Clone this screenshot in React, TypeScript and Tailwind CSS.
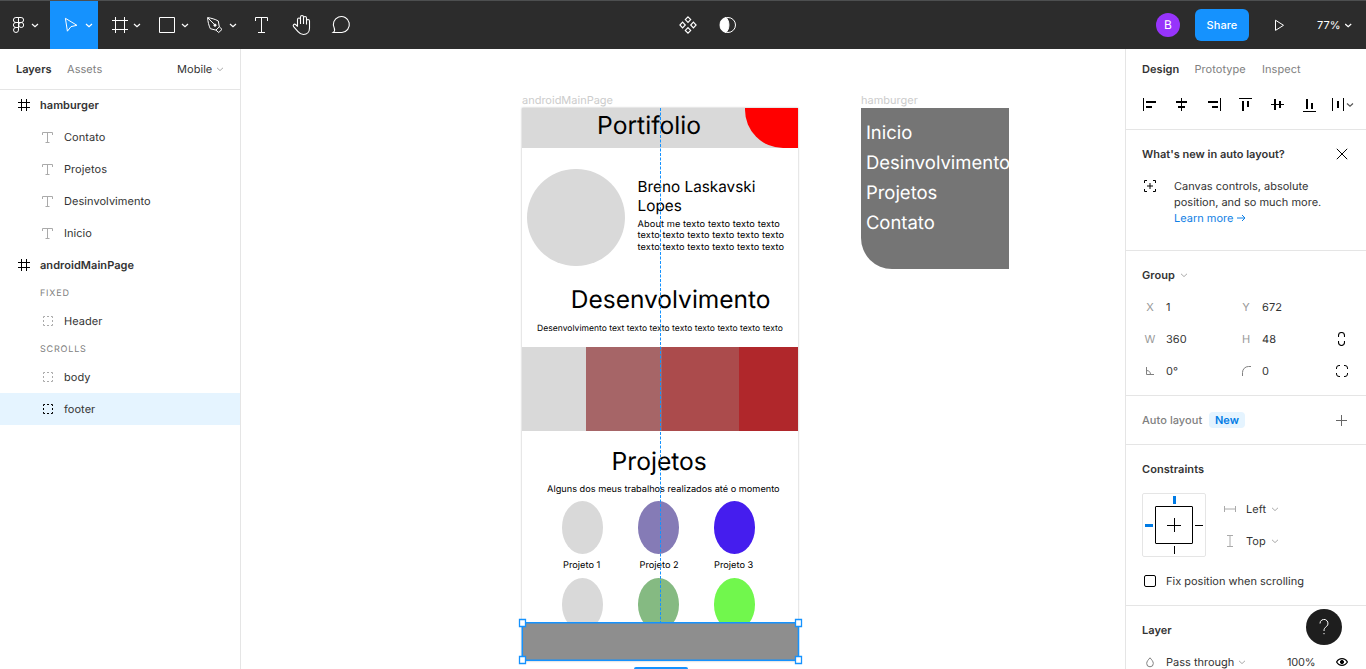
import React from "react";

type IconProps = {
  box: string;
  w: number;
  h: number;
  className?: string;
  children: React.ReactNode;
};

function Icon({ box, w, h, className = "", children }: IconProps) {
  return (
    <svg
      viewBox={box}
      width={w}
      height={h}
      fill="none"
      stroke="currentColor"
      strokeWidth={1}
      className={"shrink-0 " + className}
    >
      {children}
    </svg>
  );
}

function Chevron({ className = "" }: { className?: string }) {
  return (
    <Icon box="0 0 8 8" w={8} h={8} className={className}>
      <path d="M1 2.8 4 5.6 7 2.8" />
    </Icon>
  );
}

function Toolbar() {
  return (
    <header className="flex h-[49px] shrink-0 items-stretch border-t border-[#4d4f50] bg-[#2c2c2c] text-white">
      <Icon box="0 1 50 48" w={50} h={48}>
        <path d="M18.5 17.5h-2.6a2.5 2.5 0 0 0 0 5h2.6zM18.5 17.5h2.6a2.5 2.5 0 0 1 0 5h-2.6zM18.5 22.5h-2.6a2.5 2.5 0 0 0 0 5h2.6zM18.5 27.5h-2.6a2.5 2.5 0 1 0 2.6 2.6z" />
        <circle cx="21.2" cy="25" r="2.5" />
        <path d="M32 24l3 2.8 3-2.8" strokeWidth="1.2" />
      </Icon>
      <div className="flex bg-[#1592fe]">
        <Icon box="50 1 48 48" w={48} h={48}>
          <path d="M65.4 18.3 76.9 25.3 71 26.6 67.4 31.2z" strokeLinejoin="round" />
          <path d="M86 24l3 2.8 3-2.8" strokeWidth="1.2" />
        </Icon>
      </div>
      <Icon box="98 1 48 48" w={48} h={48}>
        <path d="M115.5 17v16M124.5 17v16M112 20.5h16M112 29.5h16" />
        <path d="M134 24l3 2.8 3-2.8" strokeWidth="1.2" />
      </Icon>
      <Icon box="146 1 48 48" w={48} h={48}>
        <path d="M159.5 17.5h15v15h-15z" />
        <path d="M182 24l3 2.8 3-2.8" strokeWidth="1.2" />
      </Icon>
      <Icon box="194 1 48 48" w={48} h={48}>
        <path d="M207.6 17.6c3.6.5 7.6 1.6 10.7 3.4l1 5.8-3.4 3.3-5.6-1.4c-1.5-3.2-2.5-7.2-2.7-11.1z" />
        <path d="M219.3 26.8l2.7 2.6-3.3 3.1-2.8-2.4M207.8 17.8l6.7 6.8" />
        <circle cx="215" cy="25.2" r="1.1" fill="currentColor" />
        <path d="M230 24l3 2.8 3-2.8" strokeWidth="1.2" />
      </Icon>
      <Icon box="242 1 40 48" w={40} h={48}>
        <path d="M255.5 21v-3.5h12V21M261.5 17.5v15M258 32.5h7" />
      </Icon>
      <Icon box="282 1 40 48" w={40} h={48}>
        <path
          d="M297.5 26.8v-7.3a1.5 1.5 0 0 1 3 0v4.5M300.5 24v-7a1.5 1.5 0 0 1 3 0v7M303.5 24v-6a1.5 1.5 0 0 1 3 0v6.5M306.5 24.5v-3.5a1.5 1.5 0 0 1 3 0v7c0 3.8-2.3 6.5-6 6.5-2.7 0-4-1-5.5-2.8l-4.4-5a1.5 1.5 0 0 1 2-2.2l1.9 1.8"
          strokeWidth="1.1"
        />
      </Icon>
      <Icon box="322 1 40 48" w={40} h={48}>
        <path d="M333.2 32.5c1.4-1 1.8-2.3 1.1-4.2a8 8 0 1 1 7.6 4.2z" strokeWidth="1.1" />
      </Icon>
      <div className="flex flex-1 pl-[306px]">
        <Icon box="668 1 40 48" w={40} h={48}>
          <path
            d="M688 16.8l2.7 2.8-2.7 2.8-2.7-2.8zM688 27.6l2.7 2.8-2.7 2.8-2.7-2.8zM682.6 22.2l2.7 2.8-2.7 2.8-2.7-2.8zM693.4 22.2l2.7 2.8-2.7 2.8-2.7-2.8z"
            strokeWidth="1.15"
          />
        </Icon>
        <Icon box="708 1 40 48" w={40} h={48}>
          <circle cx="728" cy="25" r="7.5" />
          <path d="M726 17.5a7.7 7.7 0 0 0 0 15c3.9-3.5 3.9-11.5 0-15z" fill="currentColor" />
        </Icon>
      </div>
      <div className="flex w-[210px] items-center">
        <span className="flex h-6 w-6 items-center justify-center rounded-full bg-[#9734fb] text-xs">B</span>
        <button className="ml-[15px] h-8 w-[54px] rounded-md bg-[#1592fe] text-[11px] font-medium">Share</button>
        <Icon box="1249 1 60 48" w={60} h={48}>
          <path d="M1275.5 20.2v10.2l8-5.1z" />
        </Icon>
        <span className="ml-2 w-[28px] text-[11px]">77%</span>
        <Icon box="1345 1 8 48" w={8} h={48}>
          <path d="M1345.2 24l3 2.8 3-2.8" strokeWidth="1.2" />
        </Icon>
      </div>
    </header>
  );
}

function FrameRow({ name }: { name: string }) {
  return (
    <div className="flex h-8 items-center pl-[18px] font-semibold">
      <Icon box="0 0 12 12" w={12} h={12} className="text-black">
        <path d="M3.5 0v12M8.5 0v12M0 3.5h12M0 8.5h12" />
      </Icon>
      <span className="ml-[10px]">{name}</span>
    </div>
  );
}

function TextRow({ name }: { name: string }) {
  return (
    <div className="flex h-8 items-center pl-[42px]">
      <Icon box="0 0 11 11" w={11} h={11} className="text-[#aaaaaa]">
        <path d="M0.5 3V0.5h10V3M5.5 0.5v10M3.5 10.5h4" />
      </Icon>
      <span className="ml-[11px]">{name}</span>
    </div>
  );
}

function GroupRow({ name, selected = false }: { name: string; selected?: boolean }) {
  return (
    <div className={"flex h-8 items-center pl-[43px] " + (selected ? "bg-[#e5f4ff]" : "")}>
      <Icon box="0 0 10 10" w={10} h={10} className={selected ? "text-black" : "text-[#aaaaaa]"}>
        <path d="M0.5 2V0.5H2M8 0.5h1.5V2M9.5 8v1.5H8M2 9.5H0.5V8M4 0.5h2M4 9.5h2M0.5 4v2M9.5 4v2" />
      </Icon>
      <span className="ml-[11px]">{name}</span>
    </div>
  );
}

function SectionLabel({ children }: { children: string }) {
  return (
    <div className="flex h-6 items-center pl-10 pt-px text-[9px] tracking-[0.09em] text-[#808080]">{children}</div>
  );
}

function LayersPanel() {
  return (
    <aside className="w-[241px] shrink-0 border-r border-[#e5e5e5] bg-white">
      <div className="flex h-[41px] items-center border-b border-[#e5e5e5] pl-4">
        <span className="w-[51px] font-semibold tracking-normal">Layers</span>
        <span className="w-[110px] text-[#808080]">Assets</span>
        <span className="w-[39px]">Mobile</span>
        <Chevron className="text-[#aaaaaa]" />
      </div>
      <div className="-mt-px">
        <FrameRow name="hamburger" />
        <TextRow name="Contato" />
        <TextRow name="Projetos" />
        <TextRow name="Desinvolvimento" />
        <TextRow name="Inicio" />
        <FrameRow name="androidMainPage" />
        <SectionLabel>FIXED</SectionLabel>
        <GroupRow name="Header" />
        <SectionLabel>SCROLLS</SectionLabel>
        <GroupRow name="body" />
        <GroupRow name="footer" selected />
      </div>
    </aside>
  );
}

function Canvas() {
  return (
    <main className="relative flex-1 overflow-hidden bg-white tracking-normal text-black">
      <span className="absolute left-[281px] top-[43px] text-[11px] leading-4 text-[#cccccc]">androidMainPage</span>
      <div className="absolute left-[280.6px] top-[59px] h-[553px] w-[276.6px] bg-white shadow-[0_0_2px_rgba(0,0,0,0.3)]">
        <div className="relative h-[39.5px] overflow-hidden bg-[#d9d9d9]">
          <div className="absolute right-0 top-0 h-[39.5px] w-[53px] rounded-bl-[38px] bg-[#ff0000]" />
          <span className="absolute left-[75.5px] top-[2px] whitespace-nowrap text-[24.64px] leading-[30px]">
            Portifolio
          </span>
        </div>
        <div className="absolute left-[5.5px] top-[61px] h-[97px] w-[98px] rounded-full bg-[#d9d9d9]" />
        <div className="absolute left-[116px] top-[70px] whitespace-nowrap text-[15.3px] leading-[18.5px]">
          Breno Laskavski
          <br />
          Lopes
        </div>
        <div className="absolute left-[116px] top-[110.5px] whitespace-nowrap text-[9.24px] leading-[11.5px] tracking-[0.08px]">
          About me texto texto texto texto
          <br />
          texto texto texto texto texto texto
          <br />
          texto texto texto texto texto texto
        </div>
        <span className="absolute left-[49.2px] top-[176px] whitespace-nowrap text-[24.5px] leading-[30px]">
          Desenvolvimento
        </span>
        <span className="absolute left-[15.5px] top-[215px] whitespace-nowrap text-[8.5px] leading-[12px] tracking-[0.03px]">
          Desenvolvimento text texto texto texto texto texto texto texto
        </span>
        <div className="absolute left-0 top-[239px] flex h-[84px] w-full">
          <div className="w-[64px] bg-[#d9d9d9]" />
          <div className="w-[76px] bg-[#a66567]" />
          <div className="w-[77px] bg-[#ab4b4c]" />
          <div className="flex-1 bg-[#b0272b]" />
        </div>
        <span className="absolute left-[90px] top-[338px] whitespace-nowrap text-[24.64px] leading-[30px]">
          Projetos
        </span>
        <span className="absolute left-[25.5px] top-[376px] whitespace-nowrap text-[9.2px] leading-[12px]">
          Alguns dos meus trabalhos realizados até o momento
        </span>
        <div className="absolute left-[40px] top-[393px] h-[53px] w-[41.5px] rounded-[50%] bg-[#d9d9d9]" />
        <div className="absolute left-[116px] top-[393px] h-[53px] w-[41.5px] rounded-[50%] bg-[#857bb6]" />
        <div className="absolute left-[192px] top-[393px] h-[53px] w-[41.5px] rounded-[50%] bg-[#451dee]" />
        <span className="absolute left-[41.5px] top-[452px] whitespace-nowrap text-[9.24px] leading-[12px]">
          Projeto 1
        </span>
        <span className="absolute left-[118px] top-[452px] whitespace-nowrap text-[9.24px] leading-[12px]">
          Projeto 2
        </span>
        <span className="absolute left-[192.5px] top-[452px] whitespace-nowrap text-[9.24px] leading-[12px]">
          Projeto 3
        </span>
        <div className="absolute left-[40px] top-[470px] h-[53px] w-[41.5px] rounded-[50%] bg-[#d9d9d9]" />
        <div className="absolute left-[116px] top-[470px] h-[53px] w-[41.5px] rounded-[50%] bg-[#85ba82]" />
        <div className="absolute left-[192px] top-[470px] h-[53px] w-[41.5px] rounded-[50%] bg-[#71f74d]" />
        <div className="absolute left-0 top-[515px] h-[37px] w-full bg-[#8e8e8e]" />
      </div>

      <svg className="absolute left-[275px] top-[59px]" width="290" height="561" viewBox="516 108 290 561" fill="none">
        <path d="M660.5 108v514" stroke="#1592fe" strokeDasharray="3 1.5" />
        <path d="M522.3 622.8h276.2v37.4h-276.2z" stroke="#1592fe" strokeWidth="1.5" />
        <path
          d="M519.5 619.5h6v7h-6zM795.5 619.5h6v7h-6zM519.5 656.5h6v7h-6zM795.5 656.5h6v7h-6z"
          fill="#fff"
          stroke="#1592fe"
          strokeWidth="1.3"
        />
        <rect x="634" y="667" width="54" height="16" rx="2" fill="#1592fe" />
      </svg>

      <span className="absolute left-[620px] top-[43px] text-[11px] leading-4 text-[#cccccc]">hamburger</span>
      <div className="absolute left-[619.7px] top-[59px] h-[161px] w-[148.6px] rounded-bl-[31px] bg-[#757575] pl-[5.2px] pt-[10px] text-[18.48px] leading-[30px] text-white">
        <div className="whitespace-nowrap">Inicio</div>
        <div className="whitespace-nowrap">Desinvolvimento</div>
        <div className="whitespace-nowrap">Projetos</div>
        <div className="whitespace-nowrap">Contato</div>
      </div>
    </main>
  );
}

function Field({ label, value }: { label: React.ReactNode; value: string }) {
  return (
    <div className="flex h-8 w-24 items-center">
      <span className="flex w-6 justify-center pr-2 text-[#999999]">{label}</span>
      <span>{value}</span>
    </div>
  );
}

function DesignPanel() {
  return (
    <aside className="flex w-[241px] shrink-0 flex-col overflow-hidden border-l border-[#e5e5e5] bg-white">
      <section className="h-[81px] shrink-0 border-b border-[#e5e5e5]">
        <div className="flex h-10 items-center pl-4">
          <span className="w-[52.5px] font-semibold">Design</span>
          <span className="w-[67.5px] text-[#808080]">Prototype</span>
          <span className="text-[#808080]">Inspect</span>
        </div>
        <Icon box="1126 89 240 32" w={240} h={32} className="text-black">
          <path d="M1143.5 98v13M1220.5 98v13M1239 98.5h13M1303 111.5h13M1332.5 98v13M1343.5 98v13M1181.5 98v13M1271 104.5h13" />
          <path
            d="M1146 102h10M1146 107h6M1176 102h11M1178 107h7M1208 102h10M1212 107h6M1243 101v10M1248 101v6M1275 99v11M1280 101v7M1307 99v10M1312 103v6M1338 101v7"
            strokeWidth="2"
          />
          <path d="M1347 103.5l3 2.8 3-2.8" stroke="#555" strokeWidth="1.2" />
        </Icon>
      </section>

      <section className="h-[121px] shrink-0 border-b border-[#e5e5e5] pt-2 tracking-normal">
        <div className="flex h-8 items-center justify-between pl-4 pr-[18px] font-semibold">
          <span>What's new in auto layout?</span>
          <Icon box="0 0 12 12" w={12} h={12} className="text-black">
            <path d="M0.8 0.8l10.4 10.4M11.2 0.8 0.8 11.2" />
          </Icon>
        </div>
        <div className="flex pl-[18px] pt-2">
          <Icon box="0 0 12 12" w={12} h={12} className="mt-[2px] text-black">
            <path d="M0.5 3V0.5H3M9 0.5h2.5V3M11.5 9v2.5H9M3 11.5H0.5V9M6 3v6M3 6h6" />
          </Icon>
          <p className="ml-[18px] leading-4">
            Canvas controls, absolute
            <br />
            position, and so much more.
            <br />
            <span className="flex items-center text-[#1080e5]">
              Learn more
              <Icon box="0 0 9 8" w={9} h={8} className="ml-[4px]">
                <path d="M0 4h8M5 1l3 3-3 3" />
              </Icon>
            </span>
          </p>
        </div>
      </section>

      <section className="h-[145px] shrink-0 border-b border-[#e5e5e5] pt-2">
        <div className="flex h-8 items-center pl-4">
          <span className="font-semibold">Group</span>
          <Chevron className="ml-[5px] text-[#aaaaaa]" />
        </div>
        <div className="flex pl-4">
          <Field label="X" value="1" />
          <Field label="Y" value="672" />
        </div>
        <div className="flex items-center pl-4">
          <Field label="W" value="360" />
          <Field label="H" value="48" />
          <Icon box="0 0 7 14" w={7} h={14} className="ml-[4px] text-black">
            <path d="M0.5 5V3.5a3 3 0 0 1 6 0V5M0.5 9v1.500a3 3 0 0 0 6 0V9" strokeWidth="1.1" />
          </Icon>
        </div>
        <div className="flex items-center pl-4">
          <Field
            label={
              <Icon box="0 0 8 8" w={8} h={8} className="text-[#808080]">
                <path d="M0.5 0v7.5H8M0.5 3.5c2.5 0 4 1.5 4 4" />
              </Icon>
            }
            value="0°"
          />
          <Field
            label={
              <Icon box="0 0 10 10" w={10} h={10} className="text-[#808080]">
                <path d="M1.5 10V6.5a6 6 0 0 1 6-6H10" />
              </Icon>
            }
            value="0"
          />
          <Icon box="0 0 12 12" w={12} h={12} className="ml-[2px] text-black">
            <path d="M0.5 4V3A2.5 2.5 0 0 1 3 0.5h1M8 0.5h1A2.5 2.5 0 0 1 11.5 3v1M11.5 8v1A2.5 2.5 0 0 1 9 11.5H8M4 11.5H3A2.5 2.5 0 0 1 0.5 9V8" />
          </Icon>
        </div>
      </section>

      <section className="flex h-[49px] shrink-0 items-center border-b border-[#e5e5e5] pl-4 pr-[19px]">
        <span className="w-[67px] font-medium text-[#808080]">Auto layout</span>
        <span className="flex h-4 w-9 items-center justify-center rounded-sm bg-[#e5f4ff] font-semibold text-[#007be5]">
          New
        </span>
        <Icon box="0 0 11 11" w={11} h={11} className="ml-auto text-[#666666]">
          <path d="M5.5 0v11M0 5.5h11" />
        </Icon>
      </section>

      <section className="h-[161px] shrink-0 border-b border-[#e5e5e5] pl-4 pt-2">
        <div className="flex h-8 items-center font-semibold">Constraints</div>
        <div className="flex pt-2">
          <Icon box="1142 493 64 64" w={64} h={64} className="text-black">
            <rect x="1142.5" y="493.5" width="63" height="63" rx="1.5" stroke="#e5e5e5" />
            <rect x="1155.5" y="506.5" width="37" height="37" rx="0.5" />
            <path d="M1174.5 518v14M1167 525.5h14M1195 525.5h8M1174.5 546v8" />
            <path d="M1174.5 496v8M1145 525.5h8" stroke="#007be5" strokeWidth="3" />
          </Icon>
          <div className="ml-[18px]">
            <div className="flex h-8 items-center">
              <Icon box="0 0 12 12" w={12} h={12} className="text-[#aaaaaa]">
                <path d="M0.5 3v6M11.5 3v6M0 6h12" />
              </Icon>
              <span className="ml-[10px] mr-[5px]">Left</span>
              <Chevron className="text-[#aaaaaa]" />
            </div>
            <div className="flex h-8 items-center">
              <Icon box="0 0 12 12" w={12} h={12} className="text-[#aaaaaa]">
                <path d="M3 0.5h6M3 11.5h6M6 0v12" />
              </Icon>
              <span className="ml-[10px] mr-[5px]">Top</span>
              <Chevron className="text-[#aaaaaa]" />
            </div>
          </div>
        </div>
        <div className="mt-2 flex h-8 items-center pl-[2px]">
          <span className="h-3 w-3 rounded-[2px] border border-black" />
          <span className="ml-[10px] tracking-normal">Fix position when scrolling</span>
        </div>
      </section>

      <section className="relative shrink-0 pt-2">
        <div className="flex h-8 items-center pl-4 font-semibold">Layer</div>
        <div className="flex h-8 items-center pl-5">
          <Icon box="0 0 8 11" w={8} h={11} className="text-[#808080]">
            <path d="M4 0.8C2.5 2.6 0.7 4.3 0.7 6.5a3.3 3.3 0 0 0 6.6 0C7.3 4.3 5.5 2.6 4 0.8z" />
          </Icon>
          <span className="ml-3 mr-[4px] tracking-normal">Pass through</span>
          <Chevron className="text-[#aaaaaa]" />
          <span className="ml-auto w-[49px] tracking-[-0.02em]">100%</span>
          <Icon box="0 0 12 8" w={12} h={8} className="mr-[18px] text-black">
            <path
              d="M0.6 4C1.7 2 3.7 0.7 6 0.7S10.3 2 11.4 4C10.3 6 8.3 7.3 6 7.3S1.7 6 0.6 4z"
              strokeWidth="1.2"
            />
            <circle cx="6" cy="4" r="1.6" fill="currentColor" />
          </Icon>
        </div>
        <div className="absolute right-6 top-[3px] flex h-9 w-9 items-center justify-center rounded-full bg-[#1e1e1e] text-white">
          <Icon box="0 0 10 16" w={10} h={16}>
            <path d="M1 4.5a4 4 0 1 1 6.5 3C5.8 8.8 5 9.5 5 12M5 14v1.2" />
          </Icon>
        </div>
      </section>
    </aside>
  );
}

export default function App() {
  return (
    <div className="flex h-[669px] w-[1366px] flex-col overflow-hidden bg-white font-['Inter',sans-serif] text-[11px] tracking-[0.005em] text-[#333333] [text-rendering:geometricPrecision]">
      <Toolbar />
      <div className="flex min-h-0 flex-1">
        <LayersPanel />
        <Canvas />
        <DesignPanel />
      </div>
    </div>
  );
}
